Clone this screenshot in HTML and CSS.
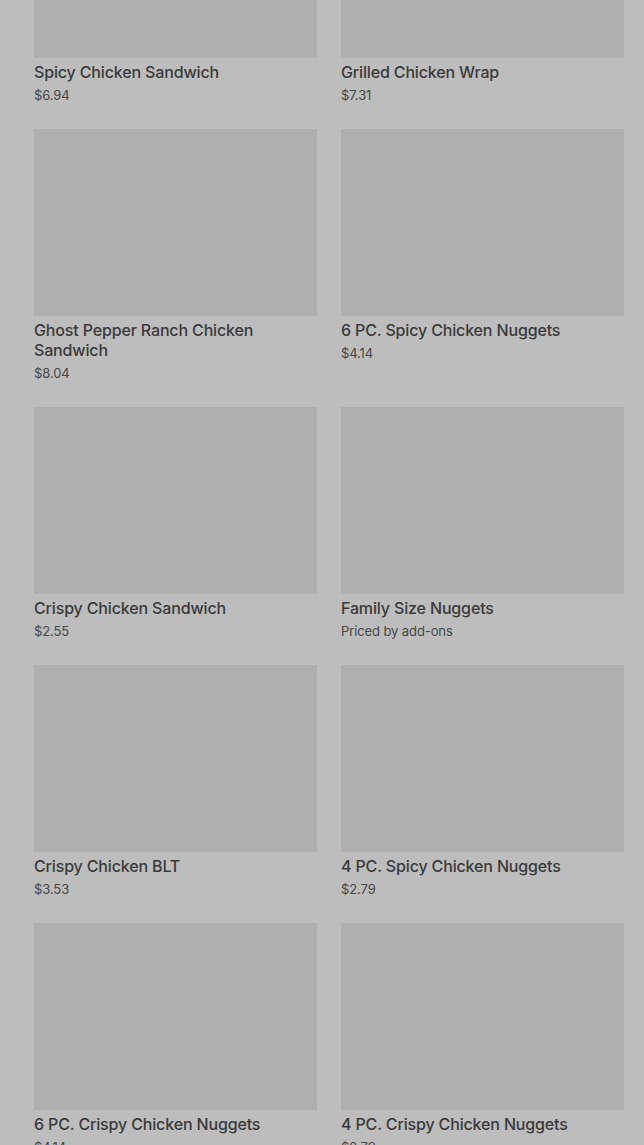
FILE: index.html
```html
<!DOCTYPE html>
<html>
<head>
<meta charset="utf-8">
<link rel="stylesheet" href="styles.css">
</head>
<body>
<main class="menu">
  <div class="grid">
    <div class="card"><div class="thumb"></div><div class="title">Spicy Chicken Sandwich</div><div class="price">$6.94</div></div>
    <div class="card"><div class="thumb"></div><div class="title">Grilled Chicken Wrap</div><div class="price">$7.31</div></div>
    <div class="card"><div class="thumb"></div><div class="title">Ghost Pepper Ranch Chicken Sandwich</div><div class="price">$8.04</div></div>
    <div class="card"><div class="thumb"></div><div class="title">6 PC. Spicy Chicken Nuggets</div><div class="price">$4.14</div></div>
    <div class="card"><div class="thumb"></div><div class="title">Crispy Chicken Sandwich</div><div class="price">$2.55</div></div>
    <div class="card"><div class="thumb"></div><div class="title">Family Size Nuggets</div><div class="price">Priced by add-ons</div></div>
    <div class="card"><div class="thumb"></div><div class="title">Crispy Chicken BLT</div><div class="price">$3.53</div></div>
    <div class="card"><div class="thumb"></div><div class="title">4 PC. Spicy Chicken Nuggets</div><div class="price">$2.79</div></div>
    <div class="card"><div class="thumb"></div><div class="title">6 PC. Crispy Chicken Nuggets</div><div class="price">$4.14</div></div>
    <div class="card"><div class="thumb"></div><div class="title">4 PC. Crispy Chicken Nuggets</div><div class="price">$2.79</div></div>
  </div>
</main>
</body>
</html>
```
FILE: styles.css
```css
html, body {
  margin: 0;
  padding: 0;
  background: #bdbdbd;
  overflow: hidden;
}
body {
  font-family: Inter, "Noto Sans", sans-serif;
  color: #3a3a3a;
}
.menu {
  padding: 0 20px 0 34px;
}
.grid {
  margin-top: -129px;
  display: grid;
  grid-template-columns: 283px 283px;
  column-gap: 24px;
  row-gap: 24px;
  align-items: start;
}
.card {
  display: flex;
  flex-direction: column;
}
.thumb {
  height: 187px;
  background: #afafaf;
}
.title {
  margin-top: 4px;
  font-size: 16px;
  line-height: 20px;
  font-weight: 500;
  letter-spacing: -0.15px;
  color: #3a3a3a;
}
.price {
  margin-top: 3px;
  font-size: 13px;
  line-height: 20px;
  letter-spacing: -0.1px;
  color: #474747;
}
```
